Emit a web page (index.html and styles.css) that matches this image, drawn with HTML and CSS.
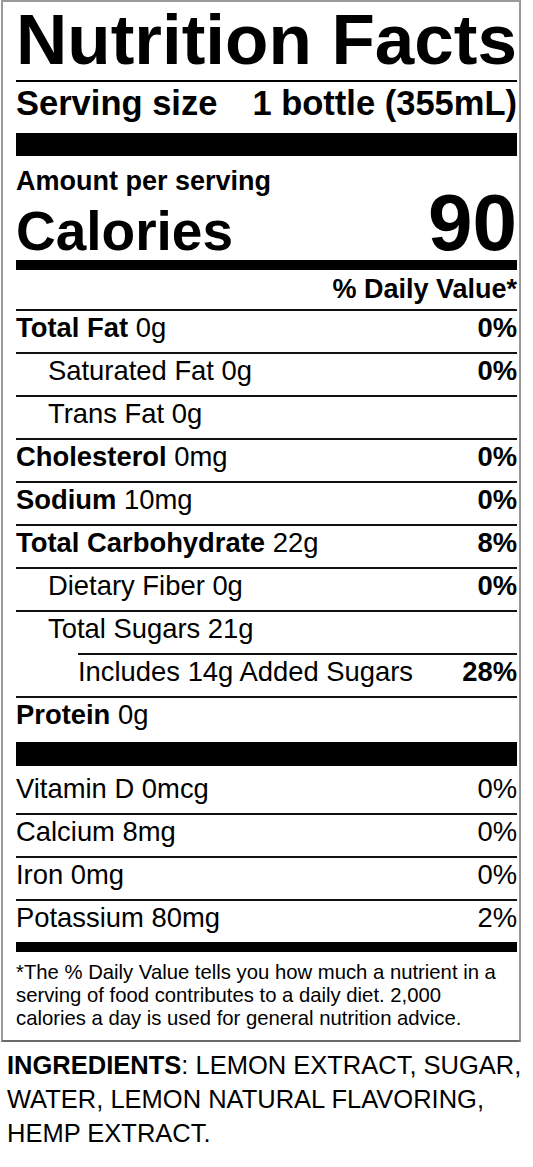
FILE: index.html
```
<!DOCTYPE html>
<html>

<head>
    <title>Nutrition Facts</title>
    <meta name="viewport" content="width=device-width,initial-scale=1">
    <link rel="stylesheet" href="styles.css">
</head>

<body>
    <div class="label">
        <h1 class="title">Nutrition Facts</h1>
        <div class="serving">
            <span>Serving size</span>
            <span>1 bottle (355mL)</span>
        </div>
        <div class="bar bar-thick"></div>

        <p class="amount">Amount per serving</p>
        <div class="calories">
            <span>Calories</span>
            <span class="cal-num">90</span>
        </div>
        <div class="bar bar-mid"></div>

        <p class="dv-head">% Daily Value*</p>
        <ul class="rows">
            <li class="row"><span><b>Total Fat</b> 0g</span><b>0%</b></li>
            <li class="row sub"><span>Saturated Fat 0g</span><b>0%</b></li>
            <li class="row sub"><span>Trans Fat 0g</span></li>
            <li class="row"><span><b>Cholesterol</b> 0mg</span><b>0%</b></li>
            <li class="row"><span><b>Sodium</b> 10mg</span><b>0%</b></li>
            <li class="row"><span><b>Total Carbohydrate</b> 22g</span><b>8%</b></li>
            <li class="row sub"><span>Dietary Fiber 0g</span><b>0%</b></li>
            <li class="row sub"><span>Total Sugars 21g</span></li>
            <li class="row subsub"><span>Includes 14g Added Sugars</span><b>28%</b></li>
            <li class="row"><span><b>Protein</b> 0g</span></li>
        </ul>
        <div class="bar bar-thick bar-protein"></div>

        <ul class="rows vitamins">
            <li class="row"><span>Vitamin D 0mcg</span><span>0%</span></li>
            <li class="row"><span>Calcium 8mg</span><span>0%</span></li>
            <li class="row"><span>Iron 0mg</span><span>0%</span></li>
            <li class="row"><span>Potassium 80mg</span><span>2%</span></li>
        </ul>
        <div class="bar bar-mid"></div>

        <p class="footnote">*The % Daily Value tells you how much a nutrient in a serving of food contributes to a daily diet. 2,000 calories a day is used for general nutrition advice.</p>
    </div>

    <p class="ingredients"><b>INGREDIENTS</b>: LEMON EXTRACT, SUGAR, WATER, LEMON NATURAL FLAVORING, HEMP EXTRACT.</p>
</body>

</html>
```

FILE: styles.css
```
body {
    margin: 0;
    background-color: #fff;
    color: #000;
    font-family: "Liberation Sans", Arial, sans-serif;
}

/* Outer box of the label */
.label {
    box-sizing: border-box;
    width: 520px;
    margin-left: 1px;
    border: 2px solid #9a9a9a;
    border-bottom-color: #6a6a6a;
    padding: 0 2px 10px 13px;
}

.title {
    margin: 0;
    padding-bottom: 2px;
    font-size: 71px;
    font-weight: bold;
    line-height: 76px;
    border-bottom: 2px solid #000;
}

.serving {
    display: flex;
    justify-content: space-between;
    font-size: 34.5px;
    font-weight: bold;
    line-height: 42px;
}

/* Black separator bars */
.bar {
    background-color: #000;
}

.bar-thick {
    height: 23px;
    margin-top: 9px;
}

.bar-protein {
    height: 24px;
    margin-top: 3px;
}

.bar-mid {
    height: 10px;
}

.amount {
    margin: 0;
    padding-top: 10px;
    font-size: 27px;
    font-weight: bold;
    line-height: 30px;
}

.calories {
    display: flex;
    justify-content: space-between;
    align-items: baseline;
    height: 64px;
    font-size: 55px;
    font-weight: bold;
    line-height: 54px;
}

.cal-num {
    font-size: 80px;
}

.dv-head {
    margin: 0;
    padding-bottom: 1px;
    text-align: right;
    font-size: 27px;
    font-weight: bold;
    line-height: 38px;
}

/* Nutrient rows */
.rows {
    list-style: none;
    margin: 0;
    padding: 0;
}

.row {
    display: flex;
    justify-content: space-between;
    border-top: 2px solid #111;
    padding-bottom: 7px;
    font-size: 27.4px;
    line-height: 34px;
}

.row.sub {
    padding-left: 32px;
}

/* The added sugars line starts at the indent, so margin not padding */
.row.subsub {
    margin-left: 62px;
}

.vitamins .row:first-child {
    border-top: none;
    padding-top: 6px;
}

.footnote {
    margin: 0;
    padding: 9px 14px 0 0;
    font-size: 20.3px;
    line-height: 23px;
}

.ingredients {
    margin: 6px 0 0 7px;
    font-size: 25.5px;
    line-height: 34px;
}
```
